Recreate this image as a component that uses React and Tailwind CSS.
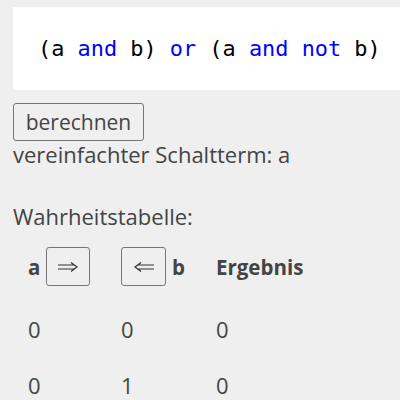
import React from 'react';

const rows = [
  ['0', '0', '0'],
  ['0', '1', '0'],
];

function Arrow({ left }) {
  return (
    <svg width="20" height="10" viewBox="0 0 20 10" fill="none" stroke="#333" strokeWidth="1.2" className={left ? 'scale-x-[-1]' : ''}>
      <path d="M0 3h17M0 7h17M13 0.5l6 4.5-6 4.5" />
    </svg>);

}

export default function App() {
  return (
    <div className="min-h-[400px] bg-[#efefef] pl-[13px] pt-[7px] text-[22px] leading-[26px] text-[#444] font-['Open_Sans','Noto_Sans',sans-serif] overflow-hidden">
      <div className="bg-white h-[83px] w-[420px] flex items-center pl-[25px] font-['DejaVu_Sans_Mono',monospace] text-[21.9px] text-black whitespace-pre">
        <span>(a <span className="text-[#0000ff]">and</span> b) <span className="text-[#0000ff]">or</span> (a <span className="text-[#0000ff]">and</span> <span className="text-[#0000ff]">not</span> b)</span>
      </div>

      <button className="mt-[13px] h-[38px] w-[131px] border border-[#767676] rounded-[3px] bg-[#efefef] text-[#444] text-[21px]">
        berechnen
      </button>
      <div>vereinfachter Schaltterm: a</div>

      <div className="mt-[36px]">Wahrheitstabelle:</div>

      <table className="mt-[3px] border-collapse table-fixed">
        <thead>
          <tr className="font-bold text-[20.5px]">
            <th className="w-[93px] p-[15px] text-left">
              <span className="flex items-center gap-[6px]">
                a
                <span className="h-[39px] w-[44px] border border-[#767676] rounded-[3px] flex items-center justify-center">
                  <Arrow />
                </span>
              </span>
            </th>
            <th className="w-[95px] p-[15px] text-left">
              <span className="flex items-center gap-[6px]">
                <span className="h-[39px] w-[45px] border border-[#767676] rounded-[3px] flex items-center justify-center">
                  <Arrow left />
                </span>
                b
              </span>
            </th>
            <th className="p-[15px] text-left">Ergebnis</th>
          </tr>
        </thead>
        <tbody>
          {rows.map((r, i) =>
          <tr key={i}>
              {r.map((v, j) => <td key={j} className="p-[15px]">{v}</td>)}
            </tr>
          )}
        </tbody>
      </table>
    </div>);

}
